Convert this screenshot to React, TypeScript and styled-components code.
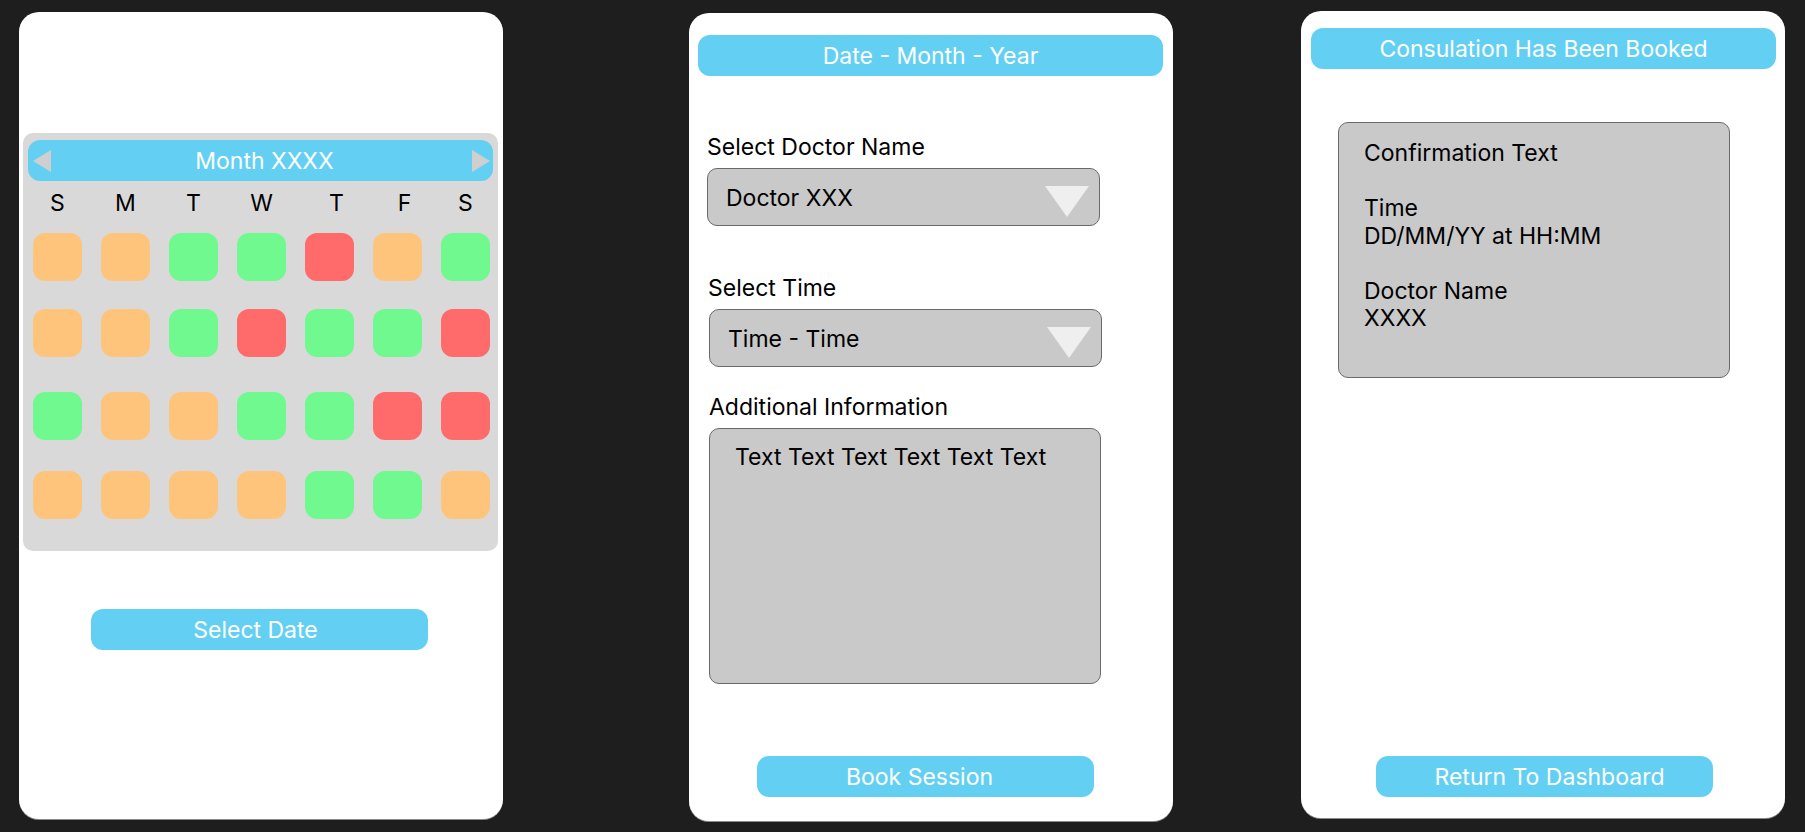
import React from "react";
import styled, { createGlobalStyle } from "styled-components";

const GlobalStyle = createGlobalStyle`
  html, body {
    margin: 0;
    padding: 0;
    background: #1e1e1e;
    font-family: Inter, "Noto Sans", Arial, sans-serif;
  }
  * { box-sizing: border-box; }
`;

const BLUE = "#63d0f3";

const Page = styled.div`
  display: flex;
  align-items: flex-start;
  height: 832px;
  padding-left: 19px;
  overflow: hidden;
  background: #1e1e1e;
`;

const Panel = styled.section<{ $top: number; $left: number; $h: number; $pad: string }>`
  width: 484px;
  height: ${(p) => p.$h}px;
  margin-top: ${(p) => p.$top}px;
  margin-left: ${(p) => p.$left}px;
  padding: ${(p) => p.$pad};
  background: #ffffff;
  border-radius: 20px;
  box-shadow: 0 1px 0 #8a8a8a;
  display: flex;
  flex-direction: column;
`;

const TitleBar = styled.div`
  height: 41px;
  width: 465px;
  flex-shrink: 0;
  background: ${BLUE};
  border-radius: 12px;
  color: #ffffff;
  font-size: 23px;
  line-height: 28px;
  display: flex;
  align-items: center;
  justify-content: center;
`;

const ActionButton = styled.button<{ $top: number; $left: number; $shift: number }>`
  width: 337px;
  height: 41px;
  margin-top: ${(p) => p.$top}px;
  margin-left: ${(p) => p.$left}px;
  background: ${BLUE};
  border: none;
  border-radius: 12px;
  color: #ffffff;
  font-family: inherit;
  font-size: 23px;
  line-height: 28px;
  padding: 0 ${(p) => (p.$shift < 0 ? -2 * p.$shift : 0)}px 0
    ${(p) => (p.$shift > 0 ? 2 * p.$shift : 0)}px;
  display: flex;
  align-items: center;
  justify-content: center;
  flex-shrink: 0;
`;

/* ---------- calendar ---------- */

const CalendarBox = styled.div`
  height: 418px;
  margin: 0 5px 0 4px;
  padding: 7px 5px 0;
  background: #d9d9d9;
  border-radius: 10px;
  display: flex;
  flex-direction: column;
`;

const MonthBar = styled.div`
  height: 41px;
  background: ${BLUE};
  border-radius: 12px;
  display: flex;
  align-items: center;
  padding: 0 3px 0 5px;
`;

const MonthTitle = styled.div`
  flex: 1;
  text-align: center;
  color: #ffffff;
  font-size: 23px;
  line-height: 28px;
  padding-left: 6px;
`;

const Arrow = styled.svg`
  display: block;
  flex-shrink: 0;
`;

const WeekGrid = styled.div<{ $top: number; $h: number }>`
  display: grid;
  grid-template-columns: repeat(7, 49px);
  column-gap: 19px;
  padding-left: 5px;
  margin-top: ${(p) => p.$top}px;
  height: ${(p) => p.$h}px;
`;

const DayLetter = styled.div<{ $dx: number }>`
  text-align: center;
  font-size: 23px;
  line-height: 28px;
  color: #000000;
  transform: translateX(${(p) => p.$dx}px);
`;

const DayCell = styled.div<{ $color: string }>`
  height: 100%;
  background: ${(p) => p.$color};
  border-radius: 12px;
`;

const COLORS: Record<string, string> = {
  O: "#ffc47c",
  G: "#70f98e",
  R: "#ff6b6b",
};

const DAYS: { d: string; dx: number }[] = [
  { d: "S", dx: 0 },
  { d: "M", dx: 0 },
  { d: "T", dx: 0 },
  { d: "W", dx: 0 },
  { d: "T", dx: 7 },
  { d: "F", dx: 7 },
  { d: "S", dx: 0 },
];

const ROWS: { pattern: string; top: number }[] = [
  { pattern: "OOGGROG", top: 16 },
  { pattern: "OOGRGGR", top: 28 },
  { pattern: "GOOGGRR", top: 35 },
  { pattern: "OOOOGGO", top: 31 },
];

/* ---------- form ---------- */

const FieldLabel = styled.div<{ $top: number; $left: number }>`
  margin-top: ${(p) => p.$top}px;
  margin-left: ${(p) => p.$left}px;
  font-size: 23px;
  line-height: 28px;
  color: #000000;
  white-space: nowrap;
`;

const Select = styled.div<{ $left: number }>`
  width: 393px;
  height: 58px;
  margin-top: 7px;
  margin-left: ${(p) => p.$left}px;
  background: #c9c9c9;
  border: 1px solid #6a6a6a;
  border-radius: 10px;
  display: flex;
  align-items: center;
  justify-content: space-between;
  padding: 0 10px 0 18px;
  flex-shrink: 0;
`;

const SelectValue = styled.span`
  font-size: 23px;
  line-height: 28px;
  color: #000000;
  padding-top: 1px;
`;

const Caret = styled.svg`
  display: block;
  align-self: flex-end;
  margin-bottom: 8px;
`;

const TextArea = styled.div<{ $top: number; $left: number; $padTop: number }>`
  width: 392px;
  height: 256px;
  margin-top: ${(p) => p.$top}px;
  margin-left: ${(p) => p.$left}px;
  background: #c9c9c9;
  border: 1px solid #6a6a6a;
  border-radius: 10px;
  padding: ${(p) => p.$padTop}px 25px 0;
  font-size: 23px;
  line-height: 27.5px;
  color: #000000;
  flex-shrink: 0;
  display: flex;
  flex-direction: column;
  gap: 27.5px;
`;

const TextGroup = styled.div`
  display: flex;
  flex-direction: column;
  white-space: nowrap;
`;

const CaretIcon = () => (
  <Caret width="44" height="31" viewBox="0 0 44 31">
    <polygon points="0,0 44,0 22,31" fill="#efefef" />
  </Caret>
);

export default function App() {
  return (
    <>
      <GlobalStyle />
      <Page>
        {/* Panel 1: calendar */}
        <Panel $top={12} $left={0} $h={807} $pad="121px 0 0 0">
          <CalendarBox>
            <MonthBar>
              <Arrow width="18" height="22" viewBox="0 0 18 22">
                <polygon points="18,0 18,22 0,11" fill="#cfcfcf" />
              </Arrow>
              <MonthTitle>Month XXXX</MonthTitle>
              <Arrow width="18" height="22" viewBox="0 0 18 22">
                <polygon points="0,0 0,22 18,11" fill="#cfcfcf" />
              </Arrow>
            </MonthBar>
            <WeekGrid $top={8} $h={28}>
              {DAYS.map((d, i) => (
                <DayLetter key={i} $dx={d.dx}>{d.d}</DayLetter>
              ))}
            </WeekGrid>
            {ROWS.map((row, r) => (
              <WeekGrid key={r} $top={row.top} $h={48}>
                {row.pattern.split("").map((c, i) => (
                  <DayCell key={i} $color={COLORS[c]} />
                ))}
              </WeekGrid>
            ))}
          </CalendarBox>
          <ActionButton $top={58} $left={72} $shift={-4}>Select Date</ActionButton>
        </Panel>

        {/* Panel 2: booking form */}
        <Panel $top={13} $left={186} $h={808} $pad="22px 10px 0 9px">
          <TitleBar>Date - Month - Year</TitleBar>
          <FieldLabel $top={57} $left={9}>Select Doctor Name</FieldLabel>
          <Select $left={9}>
            <SelectValue>Doctor XXX</SelectValue>
            <CaretIcon />
          </Select>
          <FieldLabel $top={48} $left={10}>Select Time</FieldLabel>
          <Select $left={11}>
            <SelectValue>Time - Time</SelectValue>
            <CaretIcon />
          </Select>
          <FieldLabel $top={26} $left={11}>Additional Information</FieldLabel>
          <TextArea $top={7} $left={11} $padTop={15}>
            <TextGroup>Text Text Text Text Text Text</TextGroup>
          </TextArea>
          <ActionButton $top={72} $left={59} $shift={-6}>Book Session</ActionButton>
        </Panel>

        {/* Panel 3: confirmation */}
        <Panel $top={11} $left={128} $h={807} $pad="17px 10px 0 10px">
          <TitleBar>Consulation Has Been Booked</TitleBar>
          <TextArea $top={53} $left={27} $padTop={17}>
            <TextGroup>Confirmation Text</TextGroup>
            <TextGroup>
              <span>Time</span>
              <span>DD/MM/YY at HH:MM</span>
            </TextGroup>
            <TextGroup>
              <span>Doctor Name</span>
              <span>XXXX</span>
            </TextGroup>
          </TextArea>
          <ActionButton $top={378} $left={65} $shift={5}>Return To Dashboard</ActionButton>
        </Panel>
      </Page>
    </>
  );
}
